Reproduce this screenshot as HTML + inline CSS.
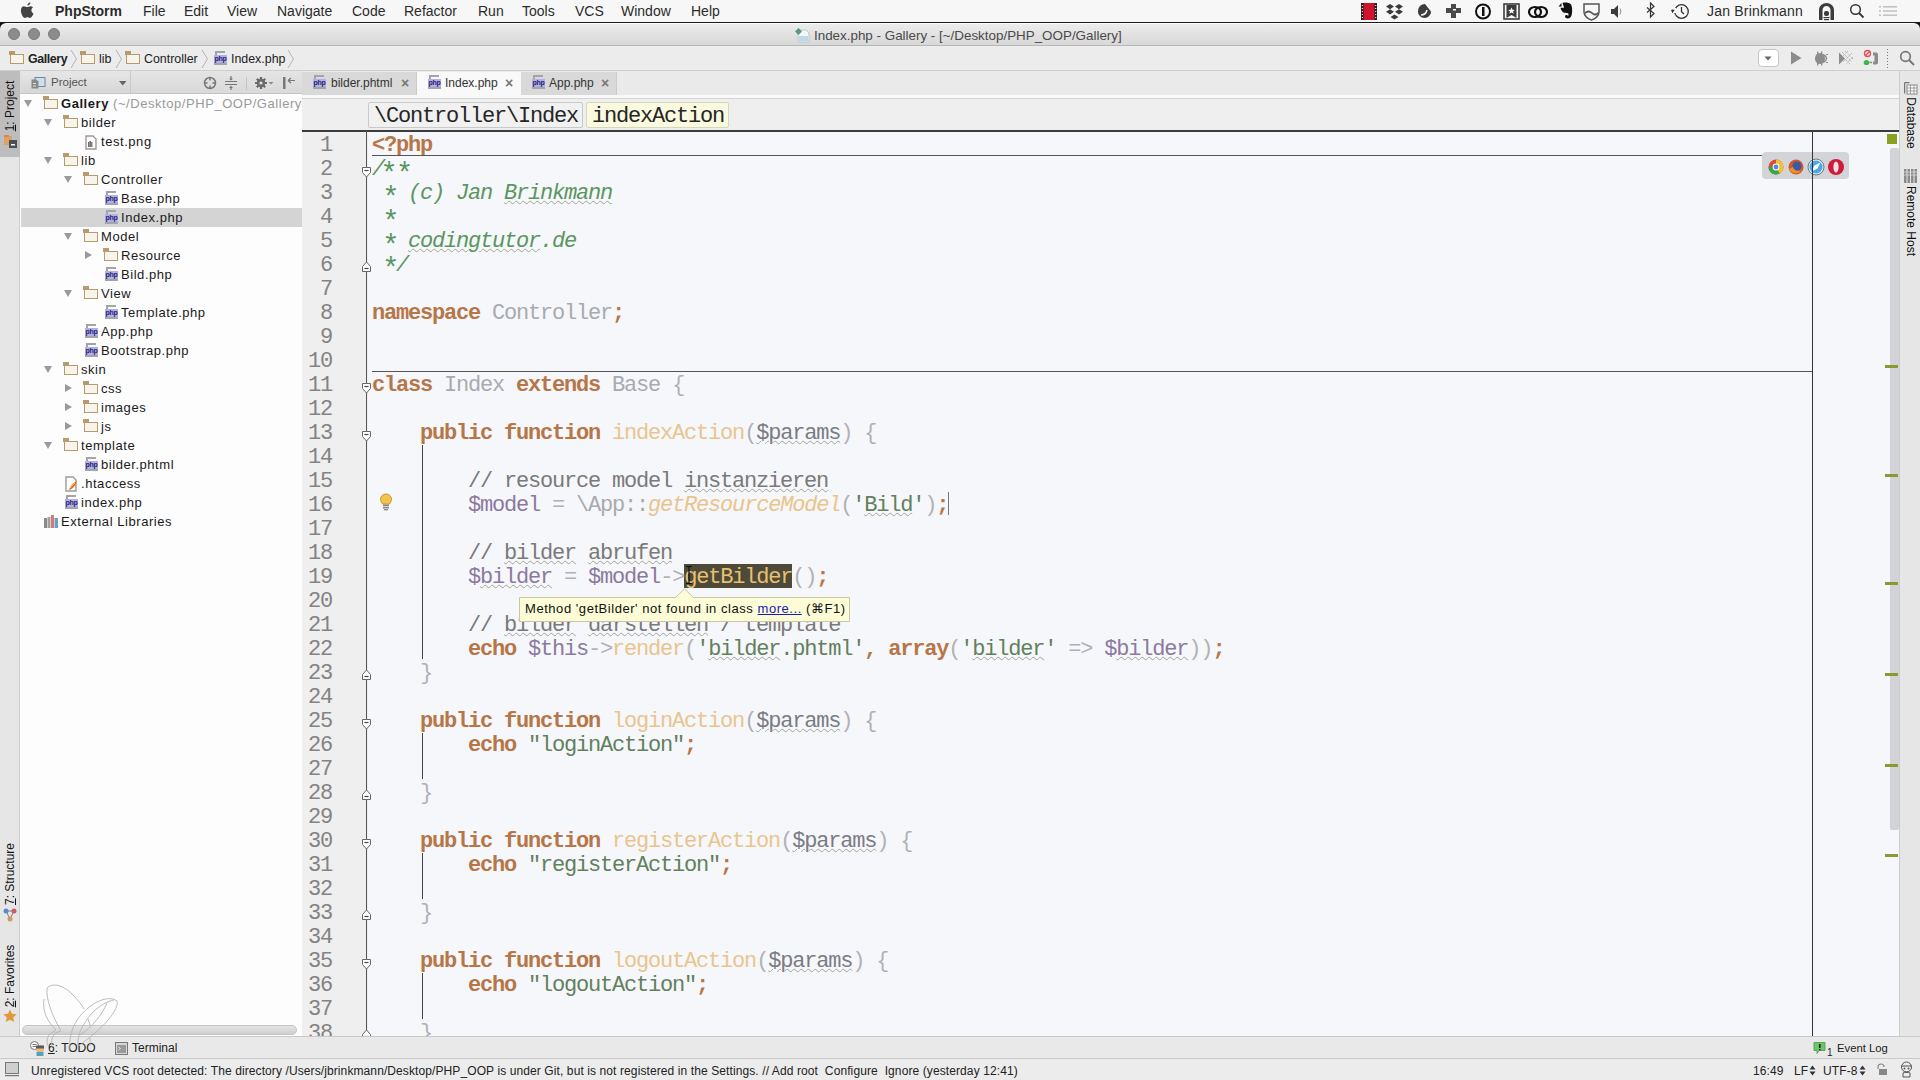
<!DOCTYPE html>
<html><head><meta charset="utf-8">
<style>
*{margin:0;padding:0;box-sizing:border-box}
html,body{width:1920px;height:1080px;overflow:hidden;background:#e8e8e8;font-family:"Liberation Sans",sans-serif;color:#222}
.a{position:absolute}
#menubar{left:0;top:0;width:1920px;height:23px;background:#f7f7f7;border-bottom:1px solid #1a1a1a}
#titlebar{left:0;top:23px;width:1920px;height:23px;background:linear-gradient(#ececec,#d8d8d8);border-top:1px solid #fdfdfd;border-bottom:1px solid #b8b8b8}
#navbar{left:0;top:46px;width:1920px;height:25px;background:#ececec;border-bottom:1px solid #cfcfcf}
#lstrip{left:0;top:71px;width:20px;height:965px;background:#e6e6e6;border-right:1px solid #cdcdcd}
#proj{left:20px;top:71px;width:283px;height:965px;background:#fdfdfd;border-right:1px solid #c5c5c5}
#projhdr{left:0;top:0;width:282px;height:23px;background:linear-gradient(#e4e4e4,#d9d9d9);border-bottom:1px solid #c4c4c4}
#tabs{left:302px;top:71px;width:1597px;height:24px;background:#eaeaea}
#crumb{left:302px;top:95px;width:1597px;height:37px;background:#efefef;border-top:3px solid #f9f9f9;border-bottom:2px solid #3c3c3c;box-shadow:inset 0 1px 0 #d4d4d4}
#gutter{left:302px;top:132px;width:66px;height:905px;background:#efefef}
#editor{left:368px;top:132px;width:1531px;height:904px;background:#f6f7fb}
#rstrip{left:1899px;top:71px;width:21px;height:965px;background:#e6e6e6;border-left:1px solid #cdcdcd}
#bottombar{left:0;top:1036px;width:1920px;height:23px;background:#e9e9e9;border-top:1px solid #c9c9c9;border-bottom:1px solid #c9c9c9}
#status{left:0;top:1059px;width:1920px;height:21px;background:#ececec}
.mono{font-family:"Liberation Mono",monospace;font-size:22px;letter-spacing:-1.2px;white-space:pre}
.ln{position:absolute;left:302px;width:30px;text-align:right;color:#838383;height:24px;line-height:24px}
.cl{position:absolute;left:372px;height:24px;line-height:24px}
.kw{color:#b77648;font-weight:bold}
.dc{color:#5a9660;font-style:italic}
.cm{color:#7a7a7a}
.cn{color:#a8aab0}
.fn{color:#e9c58e}
.fi{color:#e9c58e;font-style:italic}
.vr{color:#8c7a9e}
.pv{color:#7a7c84}
.st{color:#62805c}
.op{color:#b0b1b6}
.sc{color:#b77648;font-weight:bold}
.dcu{color:#5a9660;font-style:italic;text-decoration:underline wavy #a4a494 1px;text-underline-offset:1px}
.cmu{color:#7a7a7a;text-decoration:underline wavy #a4a494 1px;text-underline-offset:1px}
.pvu{color:#7a7c84;text-decoration:underline wavy #a4a494 1px;text-underline-offset:1px}
.stu{color:#62805c;text-decoration:underline wavy #a4a494 1px;text-underline-offset:1px}
.vru{color:#8c7a9e;text-decoration:underline wavy #a4a494 1px;text-underline-offset:1px}
.ast{font-style:normal;display:inline-block;transform:translateY(6px) scale(1.3)}
.hl{color:#e8c070}
.mt{top:0;height:22px;line-height:22px;font-size:14px;color:#2b2b2b;white-space:nowrap}
.tl{top:4px;width:12px;height:12px;border-radius:50%;background:#8c8c8c;border:1px solid #7a7a7a}
.nb{top:1px;height:25px;line-height:25px;font-size:12.4px;color:#222;white-space:nowrap}
.fold{width:14px;height:10px;border:1.7px solid #b59b6e;background:#f7f4ec}
.fold:before{content:"";position:absolute;left:-1.7px;top:-3.700px;width:6px;height:3.400px;background:#b59b6e}
.phpi{width:13px;height:15px}
.phpi:before{content:"";position:absolute;left:1px;top:0;width:10px;height:5px;border-top:2px solid #a4a4a4;border-left:2px solid #a4a4a4;box-sizing:border-box}
.phpi i{position:absolute;left:10px;top:0;width:2px;height:3px;background:#a4a4a4}
.phpi:after{content:"php";position:absolute;left:0;top:4px;width:13px;height:8px;background:#b3b0e8;color:#27246e;font:bold 7px/8px "Liberation Sans",sans-serif;text-align:center;letter-spacing:-0.3px;border-bottom:2px solid #a4a4ac;box-sizing:content-box}
.arr-o{width:0;height:0;border-left:4.500px solid transparent;border-right:4.500px solid transparent;border-top:7px solid #9a9a9a}
.arr-c{width:0;height:0;border-top:4.500px solid transparent;border-bottom:4.500px solid transparent;border-left:7px solid #9a9a9a}
.tb{top:0;height:24px;line-height:24px;font-size:12px;color:#333;white-space:nowrap}
.tx{top:0;height:24px;line-height:24px;font-size:14px;color:#777;font-weight:bold}
.vt{font-size:12px;color:#111;white-space:nowrap;line-height:14px}
.bt{top:1px;height:21px;line-height:21px;font-size:12px;color:#222;white-space:nowrap}
.st2{top:1.5px;height:21px;line-height:21px;font-size:12px;letter-spacing:0.1px;color:#222;white-space:nowrap}
.ui{font-size:13px;white-space:nowrap}
.tree{position:absolute;height:19px;line-height:19px;font-size:13px;letter-spacing:0.55px;white-space:nowrap;color:#1a1a1a}
</style></head><body>
<div id="menubar" class="a">
<svg class="a" style="left:20px;top:2px" width="15" height="17" viewBox="0 0 15 17"><path fill="#444" d="M7.200 5.000C6.300 5.000 5.200 4.200 3.900 4.200C2.100 4.200 0.900 5.900 0.900 8.500C0.900 11.800 3.000 16.000 4.900 16.000C5.900 16.000 6.300 15.300 7.400 15.300C8.500 15.300 8.900 16.000 9.900 16.000C11.400 16.000 12.700 13.700 13.600 11.600C12.200 10.900 11.400 9.800 11.400 8.300C11.400 7.000 12.100 5.900 13.100 5.200C12.300 4.500 11.300 4.200 10.500 4.200C9.100 4.200 8.100 5.000 7.200 5.000Z"/><path fill="#444" d="M7.400 3.600C7.300 2.100 8.600 0.500 10.400 0.200C10.500 1.900 9.200 3.500 7.400 3.600Z"/></svg>
<div class="a mt" style="left:55px;font-weight:bold">PhpStorm</div>
<div class="a mt" style="left:143px">File</div>
<div class="a mt" style="left:184px">Edit</div>
<div class="a mt" style="left:227px">View</div>
<div class="a mt" style="left:277px">Navigate</div>
<div class="a mt" style="left:352px">Code</div>
<div class="a mt" style="left:404px">Refactor</div>
<div class="a mt" style="left:478px">Run</div>
<div class="a mt" style="left:522px">Tools</div>
<div class="a mt" style="left:575px">VCS</div>
<div class="a mt" style="left:621px">Window</div>
<div class="a mt" style="left:691px">Help</div>
<div class="a mt" style="left:1707px;letter-spacing:0.2px">Jan Brinkmann</div>
<svg class="a" style="left:1350px;top:0" width="570" height="22" viewBox="1350 0 570 22">
<rect x="1361" y="3" width="16" height="17" fill="#d0142c"/><rect x="1361" y="3" width="2.5" height="17" fill="#222"/><rect x="1374.5" y="3" width="2.5" height="17" fill="#222"/>
<g fill="#fff"><rect x="1361.8" y="5" width="1" height="1"/><rect x="1361.8" y="8" width="1" height="1"/><rect x="1361.8" y="11" width="1" height="1"/><rect x="1361.8" y="14" width="1" height="1"/><rect x="1361.8" y="17" width="1" height="1"/><rect x="1375.2" y="5" width="1" height="1"/><rect x="1375.2" y="8" width="1" height="1"/><rect x="1375.2" y="11" width="1" height="1"/><rect x="1375.2" y="14" width="1" height="1"/><rect x="1375.2" y="17" width="1" height="1"/></g>
<g fill="#3c3c3c"><path d="M1390 4l-4 2.6 4 2.6 4-2.6zM1399 4l-4 2.6 4 2.6 4-2.6zM1390 9.2l-4 2.6 4 2.6 4-2.6zM1399 9.2l-4 2.6 4 2.6 4-2.6zM1394.5 14.5l-4 2.5 4 2.5 4-2.5z"/></g>
<path d="M1431 4c-4 0-7 3-7 7.500 0 3.500 2.800 6.500 6.500 6.500 3.500 0 6.500-3 6.500-6.500z" transform="translate(-6 0)" fill="#3c3c3c"/><path d="M1421 15c2 0 5-1 6-5" stroke="#f7f7f7" stroke-width="1.6" fill="none"/>
<path d="M1451 4h5v4h5v5h-5v5h-5v-5h-5v-5h5z" fill="#4a4a4a"/><rect x="1453" y="9" width="3" height="1.5" fill="#f7f7f7"/>
<circle cx="1483" cy="11.5" r="7" fill="none" stroke="#111" stroke-width="2"/><rect x="1482" y="7" width="2.5" height="9" fill="#111"/>
<rect x="1504" y="4" width="15" height="15" fill="none" stroke="#3c3c3c" stroke-width="1.6"/><path d="M1506.5 5v13l5-3 5 3v-13z" fill="#3c3c3c"/><path d="M1511.5 7.5l1 2.200 2.300 0.200-1.800 1.500 0.600 2.300-2.100-1.300-2.100 1.300 0.600-2.300-1.800-1.500 2.300-0.200z" fill="#f7f7f7"/>
<ellipse cx="1535" cy="12" rx="6" ry="5" fill="none" stroke="#111" stroke-width="2.2"/><ellipse cx="1541" cy="12" rx="6" ry="5" fill="none" stroke="#111" stroke-width="2.2"/>
<path d="M1558.500 6.500l3-3.500v3.500z" fill="#111"/><path d="M1562.500 3c2-1 7-0.500 8.500 1.500 1.500 2.500 1.500 8 0.500 11-0.800 2.500-3.500 3.500-5.500 2.500-1.500-0.800-1.200-3 0.500-3 1 0 1.300 0.600 1.300 1.200 0.800-0.500 1-2 0.300-3-1.500-0.500-3.500 0-5-1-1.500-1.200-2.500-3-2.500-4.500l0 0h3.500z" fill="#111"/>
<path d="M1584 4h15v8c0 4-4 7-7.500 8-3.500-1-7.500-4-7.500-8z" fill="none" stroke="#555" stroke-width="1.5"/><path d="M1585 12c3-2 5-2 7 0s4 2 6 0v2c-2 2-4 2-6 0s-4-2-7 0z" fill="#555"/>
<path d="M1611 9h3l4-4v13l-4-4h-3z" fill="#3c3c3c"/><path d="M1620 8.500c1 1.500 1 4.500 0 6" stroke="#888" stroke-width="1" fill="none"/>
<path d="M1647 7.500l7 6-3.500 3.500v-14l3.500 3.500-7 6" stroke="#333" stroke-width="1.2" fill="none"/>
<circle cx="1681.500" cy="11.500" r="6.800" fill="none" stroke="#333" stroke-width="1.3"/><path d="M1681.500 7v4.800l2.500 2.200" stroke="#333" stroke-width="1.3" fill="none"/><path d="M1671 10l3 0.500-1.600 2.800z" fill="#333"/><rect x="1673" y="8" width="3" height="5" fill="#f7f7f7"/><path d="M1671.500 9.500l3.200 0.300-1.800 2.600z" fill="#333"/>
<path d="M1819 20v-10c0-4 3.500-7 7.500-7s7.500 3 7.500 7v10h-3.500v-10c0-2.200-1.800-4-4-4s-4 1.800-4 4v10z" fill="#3c3c3c"/><rect x="1824" y="11" width="5" height="5" rx="2" fill="#3c3c3c"/><rect x="1823.500" y="17" width="6" height="1.200" fill="#3c3c3c"/><rect x="1824" y="19" width="5" height="1.200" fill="#3c3c3c"/>
<circle cx="1855.500" cy="9.500" r="4.800" fill="none" stroke="#333" stroke-width="1.500"/><path d="M1859 13l4.500 4.500" stroke="#333" stroke-width="1.800"/>
<g fill="#c4c4c4"><rect x="1879" y="6" width="2" height="1.600"/><rect x="1883" y="6" width="14" height="1.600"/><rect x="1879" y="10.200" width="2" height="1.600"/><rect x="1883" y="10.200" width="14" height="1.600"/><rect x="1879" y="14.400" width="2" height="1.600"/><rect x="1883" y="14.400" width="14" height="1.600"/></g>
</svg>
</div>
<div id="titlebar" class="a">
<div class="a" style="left:0;top:-1px;width:6px;height:6px;background:#111"><div style="width:6px;height:6px;border-top-left-radius:6px;background:#ececec"></div></div><div class="a" style="left:1914px;top:-1px;width:6px;height:6px;background:#111"><div style="width:6px;height:6px;border-top-right-radius:6px;background:#ececec"></div></div>
<div class="a tl" style="left:8px"></div><div class="a tl" style="left:28px"></div><div class="a tl" style="left:48px"></div>
<svg class="a" style="left:794px;top:3px" width="17" height="16" viewBox="0 0 17 16"><path d="M4 3h8l3 3v9h-11z" fill="#f4f6f8" stroke="#b8c4cc" stroke-width="1"/><rect x="5" y="9" width="9" height="5" fill="#bcd8ea"/><path d="M4.500 1l3.500 3.500-3.500 3.500-3.500-3.500z" fill="#5a9a7a"/></svg>
<div class="a" style="left:814px;top:1px;height:22px;line-height:22px;font-size:13.4px;color:#4a4a4a;white-space:nowrap">Index.php - Gallery - [~/Desktop/PHP_OOP/Gallery]</div>
</div>
<div id="navbar" class="a">
<div class="a fold" style="left:10px;top:8px"></div>
<div class="a nb" style="left:28px;font-weight:bold;letter-spacing:-0.4px">Gallery</div>
<svg class="a" style="left:70px;top:3px" width="8" height="20"><path d="M1 1l5.500 9-5.500 9" stroke="#b4b4b4" fill="none"/></svg>
<div class="a fold" style="left:81px;top:8px"></div>
<div class="a nb" style="left:99px">lib</div>
<svg class="a" style="left:115px;top:3px" width="8" height="20"><path d="M1 1l5.500 9-5.500 9" stroke="#b4b4b4" fill="none"/></svg>
<div class="a fold" style="left:126px;top:8px"></div>
<div class="a nb" style="left:144px">Controller</div>
<svg class="a" style="left:201px;top:3px" width="8" height="20"><path d="M1 1l5.500 9-5.500 9" stroke="#b4b4b4" fill="none"/></svg>
<div class="a phpi" style="left:214px;top:5px"></div>
<div class="a nb" style="left:231px">Index.php</div>
<svg class="a" style="left:287px;top:3px" width="8" height="20"><path d="M1 1l5.500 9-5.500 9" stroke="#b4b4b4" fill="none"/></svg>
<div class="a" style="left:1758px;top:3px;width:21px;height:18px;background:#fff;border:1px solid #c6c6c6;border-radius:4px"></div>
<svg class="a" style="left:1740px;top:0" width="180" height="25" viewBox="1740 46 180 25">
<path d="M1764.500 56.500h7l-3.500 4z" fill="#666"/>
<path d="M1791 51.500v13l10.500-6.500z" fill="#8c8c8c"/>
<g fill="#8c8c8c"><ellipse cx="1820" cy="58.500" rx="5" ry="5.500"/><path d="M1823 55c1.500 0 3.500 1.500 3.500 3.500s-2 3.500-3.500 3.500" stroke="#8c8c8c" stroke-width="1.400" fill="none"/><rect x="1817" y="51.500" width="1.300" height="2.500"/><rect x="1821" y="51.500" width="1.300" height="2.500"/><rect x="1817" y="63" width="1.300" height="2.500"/><rect x="1821" y="63" width="1.300" height="2.500"/><rect x="1826" y="54" width="2" height="1"/><rect x="1826" y="62" width="2" height="1"/></g>
<path d="M1839 52.500v12l6-6z" fill="#8c8c8c"/><path d="M1842 52l10 10M1845 51l8 8M1842 56l8 8M1848 51l-7 7M1852 53l-9 9M1853 57l-7 7" stroke="#a6a6a6" stroke-width="1" stroke-dasharray="1 1"/>
<circle cx="1867.500" cy="53.500" r="3" fill="none" stroke="#e2505a" stroke-width="1.400"/><path d="M1865.500 55.500l4-4" stroke="#e2505a" stroke-width="1.200"/>
<ellipse cx="1866.500" cy="62.500" rx="2.800" ry="2.600" fill="#3cb84a"/><path d="M1873 52.500h3c1.500 0 2 1 2 2v8c0 1-0.500 2-2 2h-3v-3h1.500v-6h-1.500z" fill="#8c8c8c"/><rect x="1869.500" y="61.700" width="2.500" height="1.500" fill="#8c8c8c"/>
<g fill="#7a7a7a"><rect x="1887" y="49" width="1" height="1"/><rect x="1887" y="52" width="1" height="1"/><rect x="1887" y="55" width="1" height="1"/><rect x="1887" y="58" width="1" height="1"/><rect x="1887" y="61" width="1" height="1"/><rect x="1887" y="64" width="1" height="1"/><rect x="1887" y="67" width="1" height="1"/></g>
<circle cx="1905.500" cy="56.500" r="4.800" fill="none" stroke="#777" stroke-width="1.700"/><path d="M1909 60l5 5" stroke="#777" stroke-width="2"/>
</svg>
</div>
<div id="lstrip" class="a">
<div class="a" style="left:0;top:0;width:20px;height:86px;background:#bdbdbd"></div>
<div class="a vt" style="left:10px;top:35px;transform:translate(-50%,-50%) rotate(-90deg)"><u>1</u>: Project</div>
<svg class="a" style="left:4px;top:64px" width="13" height="13"><rect x="0" y="1" width="8" height="9" fill="#e0a060"/><rect x="0" y="0" width="5" height="2" fill="#c89050"/><rect x="5" y="5" width="8" height="8" fill="#4a5058"/><rect x="7" y="9" width="4" height="1.500" fill="#fff"/></svg>
<div class="a vt" style="left:10px;top:803px;transform:translate(-50%,-50%) rotate(-90deg)"><u>7</u>: Structure</div>
<svg class="a" style="left:3px;top:837px" width="14" height="14"><path d="M3 3L7 11L11 3z" fill="none" stroke="#7a7a7a" stroke-width="1"/><circle cx="3" cy="3" r="2.500" fill="#5a8ad0"/><circle cx="11" cy="3" r="2.500" fill="#d05a6a"/><circle cx="7" cy="11" r="2.500" fill="#d09a5a"/></svg>
<div class="a vt" style="left:10px;top:905px;transform:translate(-50%,-50%) rotate(-90deg)"><u>2</u>: Favorites</div>
<svg class="a" style="left:3px;top:938px" width="14" height="14"><path d="M7 0.500l2 4.300 4.700 0.500-3.500 3.200 1 4.600-4.200-2.400-4.200 2.400 1-4.600-3.500-3.200 4.700-0.500z" fill="#e09a3a"/></svg>
</div>
<div id="proj" class="a">
<div id="projhdr" class="a">
<div class="a" style="left:2px;top:2px;width:108px;height:19px;background:linear-gradient(#e6e6e6,#d6d6d6);border-radius:3px"></div>
<div class="a" style="left:110px;top:0;width:1px;height:23px;background:#c8c8c8"></div>
<svg class="a" style="left:11px;top:6px" width="15" height="12"><rect x="4" y="0.500" width="10" height="9" fill="#cfe0ea" stroke="#6a8aa0" stroke-width="1"/><path d="M0.500 2.500h5l2 2v7h-7z" fill="#8a8a8a"/><rect x="2" y="6" width="3" height="1" fill="#ddd"/><rect x="2" y="8.500" width="3" height="1" fill="#ddd"/></svg>
<div class="a" style="left:31px;top:0;height:23px;line-height:23px;font-size:11.5px;color:#555">Project</div>
<svg class="a" style="left:99px;top:10px" width="8" height="5"><path d="M0 0h7.500l-3.750 4.500z" fill="#666"/></svg>
<svg class="a" style="left:182px;top:4px" width="100" height="16" viewBox="202 75 100 16">
<circle cx="210" cy="83" r="5.500" fill="none" stroke="#777" stroke-width="1.500"/><path d="M210 77.500v3M210 85.500v3M204.500 83h3M212.500 83h3" stroke="#777" stroke-width="1.500"/>
<path d="M225 81.500h12M225 84.500h12" stroke="#777" stroke-width="1.200"/><path d="M231 76v3.500M231 86.500v3.500" stroke="#777" stroke-width="1.200"/><path d="M229 78.500l2 2 2-2zM229 88l2-2 2 2z" fill="#777"/>
<rect x="246" y="77" width="1" height="13" fill="#c4c4c4"/>
<circle cx="261" cy="83" r="4.200" fill="#6a6a6a"/><g stroke="#6a6a6a" stroke-width="2.200"><path d="M261 77v12M255 83h12M256.800 78.800l8.400 8.400M265.200 78.800l-8.400 8.400"/></g><circle cx="261" cy="83" r="1.600" fill="#e0e0e0"/><path d="M268.500 82h5l-2.500 2.500z" fill="#888"/>
<rect x="283" y="77" width="2.500" height="12" fill="#777"/><path d="M288 80.500h7M288 80.500l3-2.500M288 80.500l3 2.500" stroke="#777" stroke-width="1.200" fill="none"/>
</svg>
</div>
<div class="a arr-o" style="left:4px;top:29px"></div>
<div class="a fold" style="left:24px;top:28px"></div>
<div class="tree" style="left:41px;top:23px"><span style="font-weight:bold">Gallery</span><span style="color:#9a9a9a"> (~/Desktop/PHP_OOP/Gallery)</span></div>
<div class="a arr-o" style="left:24px;top:48px"></div>
<div class="a fold" style="left:44px;top:47px"></div>
<div class="tree" style="left:61px;top:42px"><span>bilder</span></div>
<svg class="a" style="left:65px;top:64px" width="12" height="15"><path d="M1 1h7l3 3v10h-10z" fill="#fff" stroke="#9a9a9a" stroke-width="1.400"/><rect x="3" y="7" width="1.500" height="5" fill="#4a78b8"/><rect x="4.500" y="6" width="1.500" height="6" fill="#c84848"/><rect x="6" y="7" width="1.500" height="5" fill="#6a9a58"/></svg>
<div class="tree" style="left:81px;top:61px"><span>test.png</span></div>
<div class="a arr-o" style="left:24px;top:86px"></div>
<div class="a fold" style="left:44px;top:85px"></div>
<div class="tree" style="left:61px;top:80px"><span>lib</span></div>
<div class="a arr-o" style="left:44px;top:105px"></div>
<div class="a fold" style="left:64px;top:104px"></div>
<div class="tree" style="left:81px;top:99px"><span>Controller</span></div>
<div class="a phpi" style="left:85px;top:120px"></div>
<div class="tree" style="left:101px;top:118px"><span>Base.php</span></div>
<div class="a" style="left:1px;top:137px;width:281px;height:19px;background:#d4d4d4"></div>
<div class="a phpi" style="left:85px;top:139px"></div>
<div class="tree" style="left:101px;top:137px"><span>Index.php</span></div>
<div class="a arr-o" style="left:44px;top:162px"></div>
<div class="a fold" style="left:64px;top:161px"></div>
<div class="tree" style="left:81px;top:156px"><span>Model</span></div>
<div class="a arr-c" style="left:65px;top:180px"></div>
<div class="a fold" style="left:84px;top:180px"></div>
<div class="tree" style="left:101px;top:175px"><span>Resource</span></div>
<div class="a phpi" style="left:85px;top:196px"></div>
<div class="tree" style="left:101px;top:194px"><span>Bild.php</span></div>
<div class="a arr-o" style="left:44px;top:219px"></div>
<div class="a fold" style="left:64px;top:218px"></div>
<div class="tree" style="left:81px;top:213px"><span>View</span></div>
<div class="a phpi" style="left:85px;top:234px"></div>
<div class="tree" style="left:101px;top:232px"><span>Template.php</span></div>
<div class="a phpi" style="left:65px;top:253px"></div>
<div class="tree" style="left:81px;top:251px"><span>App.php</span></div>
<div class="a phpi" style="left:65px;top:272px"></div>
<div class="tree" style="left:81px;top:270px"><span>Bootstrap.php</span></div>
<div class="a arr-o" style="left:24px;top:295px"></div>
<div class="a fold" style="left:44px;top:294px"></div>
<div class="tree" style="left:61px;top:289px"><span>skin</span></div>
<div class="a arr-c" style="left:45px;top:313px"></div>
<div class="a fold" style="left:64px;top:313px"></div>
<div class="tree" style="left:81px;top:308px"><span>css</span></div>
<div class="a arr-c" style="left:45px;top:332px"></div>
<div class="a fold" style="left:64px;top:332px"></div>
<div class="tree" style="left:81px;top:327px"><span>images</span></div>
<div class="a arr-c" style="left:45px;top:351px"></div>
<div class="a fold" style="left:64px;top:351px"></div>
<div class="tree" style="left:81px;top:346px"><span>js</span></div>
<div class="a arr-o" style="left:24px;top:371px"></div>
<div class="a fold" style="left:44px;top:370px"></div>
<div class="tree" style="left:61px;top:365px"><span>template</span></div>
<div class="a phpi" style="left:65px;top:386px"></div>
<div class="tree" style="left:81px;top:384px"><span>bilder.phtml</span></div>
<svg class="a" style="left:45px;top:405px" width="14" height="16"><path d="M1 1h7l3 3v11h-10z" fill="#fff" stroke="#9a9a9a" stroke-width="1.400"/><path d="M4 14c1-4 4-7 8-9-1 4-4 8-8 9z" fill="#e06a2a"/><path d="M5 12l5-5" stroke="#f0c040" stroke-width="1"/></svg>
<div class="tree" style="left:61px;top:403px"><span>.htaccess</span></div>
<div class="a phpi" style="left:45px;top:424px"></div>
<div class="tree" style="left:61px;top:422px"><span>index.php</span></div>
<svg class="a" style="left:24px;top:444px" width="15" height="13"><rect x="0" y="3" width="3" height="10" fill="#8a8a8a"/><rect x="3.500" y="2" width="3" height="11" fill="#a0a0a0"/><rect x="7" y="0" width="3" height="13" fill="#d07a7a"/><rect x="10.500" y="3" width="3.500" height="10" fill="#6aa0c8"/></svg>
<div class="tree" style="left:41px;top:441px"><span>External Libraries</span></div>
</div>
<div class="a" style="left:22px;top:1025px;width:275px;height:10px;background:linear-gradient(#e4e4e4,#cfcfcf);border:1px solid #c4c4c4;border-radius:5px"></div>
<div id="tabs" class="a">
<div class="a" style="left:0;top:1px;width:115px;height:23px;background:#d9d9d9;border-right:1px solid #cacaca"></div>
<div class="a" style="left:115px;top:1px;width:104px;height:27px;background:#f9f9f9"></div>
<div class="a" style="left:219px;top:1px;width:96px;height:23px;background:#d9d9d9;border-right:1px solid #cacaca"></div>
<div class="a phpi" style="left:11px;top:4px"></div>
<div class="a tb" style="left:29px">bilder.phtml</div>
<div class="a tx" style="left:99px">&#215;</div>
<div class="a phpi" style="left:126px;top:4px"></div>
<div class="a tb" style="left:143px">Index.php</div>
<div class="a tx" style="left:203px">&#215;</div>
<div class="a phpi" style="left:230px;top:4px"></div>
<div class="a tb" style="left:247px">App.php</div>
<div class="a tx" style="left:299px">&#215;</div>
</div>
<div id="crumb" class="a">
<div class="a" style="left:66px;top:4px;width:215px;height:26px;background:#f1f1f1;border:1px solid #c9c9c9;border-radius:2px"></div>
<div class="a" style="left:284px;top:4px;width:143px;height:26px;background:#fafae0;border:1px solid #d6d6b8;border-radius:2px"></div>
<div class="a mono" style="left:72px;top:6px;height:26px;line-height:26px;color:#262626">\Controller\Index</div>
<div class="a mono" style="left:290px;top:6px;height:26px;line-height:26px;color:#262626">indexAction</div>
</div>
<div id="gutter" class="a"></div>
<div id="editor" class="a"></div>
<div id="rstrip" class="a">
<svg class="a" style="left:4px;top:11px" width="14" height="13"><path d="M0.500 0.500h5M0.500 0.500v11" stroke="#777" stroke-width="1.500"/><rect x="3" y="3" width="10" height="9" fill="#fff" stroke="#888" stroke-width="1"/><path d="M3 6h10M3 9h10M6.500 3v9M10 3v9" stroke="#888" stroke-width="0.800"/></svg>
<div class="a vt" style="left:11px;top:52px;transform:translate(-50%,-50%) rotate(90deg)">Database</div>
<svg class="a" style="left:4px;top:98px" width="13" height="15"><g fill="#8a8a8a"><rect x="0" y="0" width="2.500" height="14"/><rect x="3.500" y="0" width="2.500" height="14"/><rect x="7" y="0" width="2.500" height="14"/><rect x="10.500" y="0" width="2.500" height="14"/></g><path d="M0 3h13M0 6h13" stroke="#ddd" stroke-width="0.800"/></svg>
<div class="a vt" style="left:11px;top:150px;transform:translate(-50%,-50%) rotate(90deg)">Remote Host</div>
</div>
<div id="bottombar" class="a">
<svg class="a" style="left:30px;top:4px" width="16" height="15"><circle cx="4.500" cy="4.500" r="4" fill="#fff" stroke="#777" stroke-width="1"/><path d="M2.500 3.500h4M2.500 5.500h4" stroke="#555" stroke-width="0.800"/><circle cx="10" cy="8" r="4" fill="#e8b888"/><rect x="6" y="4.500" width="8" height="3" fill="#5a5a5a"/><rect x="6.500" y="11" width="7" height="4" fill="#5aa0b8"/></svg>
<div class="a bt" style="left:48px"><u>6</u>: TODO</div>
<svg class="a" style="left:115px;top:5px" width="13" height="13"><rect x="0.500" y="0.500" width="12" height="12" fill="#d8d8d8" stroke="#777" stroke-width="1"/><rect x="2" y="3" width="9" height="8" fill="#9a9a9a"/><path d="M3.500 5l2 1.500-2 1.500" stroke="#eee" stroke-width="0.900" fill="none"/></svg>
<div class="a bt" style="left:132px">Terminal</div>
<svg class="a" style="left:1813px;top:4px" width="20" height="16"><path d="M1 1.500h11v8h-6l-2 3v-3h-3z" fill="#6cc46c" stroke="#58a858" stroke-width="1"/><rect x="6" y="3" width="1.600" height="4" fill="#222"/><rect x="6" y="8" width="1.600" height="1.200" fill="#222"/><text x="14" y="15" font-size="10" font-family="Liberation Sans" fill="#222">1</text></svg>
<div class="a bt" style="left:1837px;font-size:11.3px">Event Log</div>
</div>
<div id="status" class="a">
<svg class="a" style="left:5px;top:3px" width="15" height="15"><rect x="0.500" y="0.500" width="13" height="11" fill="#cfcfcf" stroke="#777" stroke-width="1"/><rect x="0" y="13" width="14" height="1.200" fill="#777"/></svg>
<div class="a st2" style="left:31px">Unregistered VCS root detected: The directory /Users/jbrinkmann/Desktop/PHP_OOP is under Git, but is not registered in the Settings. // Add root&nbsp; Configure&nbsp; Ignore (yesterday 12:41)</div>
<div class="a st2" style="left:1753px">16:49</div>
<div class="a st2" style="left:1794px">LF<svg width="7" height="11" style="vertical-align:-1px;margin-left:1px"><path d="M0.500 4.500l3-4 3 4zM0.500 6.500l3 4 3-4z" fill="#333"/></svg></div>
<div class="a st2" style="left:1823px">UTF-8<svg width="7" height="11" style="vertical-align:-1px;margin-left:1px"><path d="M0.500 4.500l3-4 3 4zM0.500 6.500l3 4 3-4z" fill="#333"/></svg></div>
<svg class="a" style="left:1876px;top:4px" width="12" height="13"><path d="M2 6v-2c0-2 1.500-3 3-3s3 1 3 3" stroke="#888" stroke-width="1.200" fill="none"/><rect x="3" y="6" width="8" height="6" fill="#888"/></svg>
<svg class="a" style="left:1899px;top:2px" width="15" height="17"><circle cx="7.500" cy="6" r="5" fill="none" stroke="#555" stroke-width="1"/><path d="M2.500 5h10" stroke="#555"/><circle cx="5.500" cy="7.500" r="1" fill="#555"/><circle cx="9.500" cy="7.500" r="1" fill="#555"/><path d="M4 12c1-1 6-1 7 0v4h-7z" fill="none" stroke="#555" stroke-width="1"/><path d="M5.500 10.500c1 1 3 1 4 0" stroke="#555" fill="none"/></svg>
</div>
<div id="code" class="a mono" style="left:0;top:0;width:1920px;height:1036px;overflow:hidden">
<div class="a" style="left:684px;top:564px;width:108px;height:24px;background:#4d4a3a"></div>
<div class="ln" style="top:134px">1</div>
<div class="cl" style="top:134px"><span class="kw">&lt;?php</span></div>
<div class="ln" style="top:158px">2</div>
<div class="cl" style="top:158px"><span class="dc">/</span><span class="dc ast">**</span></div>
<div class="ln" style="top:182px">3</div>
<div class="cl" style="top:182px"><span class="dc"> </span><span class="dc ast">*</span><span class="dc"> (c) Jan </span><span class="dcu">Brinkmann</span></div>
<div class="ln" style="top:206px">4</div>
<div class="cl" style="top:206px"><span class="dc"> </span><span class="dc ast">*</span></div>
<div class="ln" style="top:230px">5</div>
<div class="cl" style="top:230px"><span class="dc"> </span><span class="dc ast">*</span><span class="dc"> </span><span class="dcu">codingtutor</span><span class="dc">.de</span></div>
<div class="ln" style="top:254px">6</div>
<div class="cl" style="top:254px"><span class="dc"> </span><span class="dc ast">*</span><span class="dc">/</span></div>
<div class="ln" style="top:278px">7</div>
<div class="ln" style="top:302px">8</div>
<div class="cl" style="top:302px"><span class="kw">namespace</span> <span class="cn">Controller</span><span class="sc">;</span></div>
<div class="ln" style="top:326px">9</div>
<div class="ln" style="top:350px">10</div>
<div class="ln" style="top:374px">11</div>
<div class="cl" style="top:374px"><span class="kw">class</span> <span class="cn">Index</span> <span class="kw">extends</span> <span class="cn">Base</span> <span class="op">{</span></div>
<div class="ln" style="top:398px">12</div>
<div class="ln" style="top:422px">13</div>
<div class="cl" style="top:422px">    <span class="kw">public</span> <span class="kw">function</span> <span class="fn">indexAction</span><span class="op">(</span><span class="pvu">$params</span><span class="op">)</span> <span class="op">{</span></div>
<div class="ln" style="top:446px">14</div>
<div class="ln" style="top:470px">15</div>
<div class="cl" style="top:470px">        <span class="cm">// resource model </span><span class="cmu">instanzieren</span></div>
<div class="ln" style="top:494px">16</div>
<div class="cl" style="top:494px">        <span class="vr">$model</span> <span class="op">=</span> <span class="cn">\App::</span><span class="fi">getResourceModel</span><span class="op">(</span><span class="st">'</span><span class="stu">Bild</span><span class="st">'</span><span class="op">)</span><span class="sc">;</span></div>
<div class="ln" style="top:518px">17</div>
<div class="ln" style="top:542px">18</div>
<div class="cl" style="top:542px">        <span class="cm">// </span><span class="cmu">bilder</span><span class="cm"> </span><span class="cmu">abrufen</span></div>
<div class="ln" style="top:566px">19</div>
<div class="cl" style="top:566px">        <span class="vr">$</span><span class="vru">bilder</span> <span class="op">=</span> <span class="vr">$model</span><span class="op">-&gt;</span><span class="hl">getBilder</span><span class="op">()</span><span class="sc">;</span></div>
<div class="ln" style="top:590px">20</div>
<div class="ln" style="top:614px">21</div>
<div class="cl" style="top:614px">        <span class="cm">// </span><span class="cmu">bilder</span><span class="cm"> </span><span class="cmu">darstellen</span><span class="cm"> / template</span></div>
<div class="ln" style="top:638px">22</div>
<div class="cl" style="top:638px">        <span class="kw">echo</span> <span class="vr">$this</span><span class="op">-&gt;</span><span class="fn">render</span><span class="op">(</span><span class="st">'</span><span class="stu">bilder</span><span class="st">.phtml'</span><span class="sc">,</span> <span class="kw">array</span><span class="op">(</span><span class="st">'</span><span class="stu">bilder</span><span class="st">'</span> <span class="op">=&gt;</span> <span class="vr">$</span><span class="vru">bilder</span><span class="op">))</span><span class="sc">;</span></div>
<div class="ln" style="top:662px">23</div>
<div class="cl" style="top:662px">    <span class="op">}</span></div>
<div class="ln" style="top:686px">24</div>
<div class="ln" style="top:710px">25</div>
<div class="cl" style="top:710px">    <span class="kw">public</span> <span class="kw">function</span> <span class="fn">loginAction</span><span class="op">(</span><span class="pvu">$params</span><span class="op">)</span> <span class="op">{</span></div>
<div class="ln" style="top:734px">26</div>
<div class="cl" style="top:734px">        <span class="kw">echo</span> <span class="st">"loginAction"</span><span class="sc">;</span></div>
<div class="ln" style="top:758px">27</div>
<div class="ln" style="top:782px">28</div>
<div class="cl" style="top:782px">    <span class="op">}</span></div>
<div class="ln" style="top:806px">29</div>
<div class="ln" style="top:830px">30</div>
<div class="cl" style="top:830px">    <span class="kw">public</span> <span class="kw">function</span> <span class="fn">registerAction</span><span class="op">(</span><span class="pvu">$params</span><span class="op">)</span> <span class="op">{</span></div>
<div class="ln" style="top:854px">31</div>
<div class="cl" style="top:854px">        <span class="kw">echo</span> <span class="st">"registerAction"</span><span class="sc">;</span></div>
<div class="ln" style="top:878px">32</div>
<div class="ln" style="top:902px">33</div>
<div class="cl" style="top:902px">    <span class="op">}</span></div>
<div class="ln" style="top:926px">34</div>
<div class="ln" style="top:950px">35</div>
<div class="cl" style="top:950px">    <span class="kw">public</span> <span class="kw">function</span> <span class="fn">logoutAction</span><span class="op">(</span><span class="pvu">$params</span><span class="op">)</span> <span class="op">{</span></div>
<div class="ln" style="top:974px">36</div>
<div class="cl" style="top:974px">        <span class="kw">echo</span> <span class="st">"logoutAction"</span><span class="sc">;</span></div>
<div class="ln" style="top:998px">37</div>
<div class="ln" style="top:1022px">38</div>
<div class="cl" style="top:1022px">    <span class="op">}</span></div>
</div>
<div id="deco" class="a" style="left:0;top:0;width:1920px;height:1036px;overflow:hidden">
<div class="a" style="left:366px;top:131px;width:1px;height:905px;background:#555"></div>
<svg class="a" style="left:362px;top:167px" width="10" height="11"><path d="M0.500 0.500h8v5l-4 4.500-4-4.500z" fill="#fff" stroke="#666" stroke-width="1"/><path d="M2.500 3.500h4" stroke="#444" stroke-width="1.200"/></svg>
<svg class="a" style="left:362px;top:383px" width="10" height="11"><path d="M0.500 0.500h8v5l-4 4.500-4-4.500z" fill="#fff" stroke="#666" stroke-width="1"/><path d="M2.500 3.500h4" stroke="#444" stroke-width="1.200"/></svg>
<svg class="a" style="left:362px;top:431px" width="10" height="11"><path d="M0.500 0.500h8v5l-4 4.500-4-4.500z" fill="#fff" stroke="#666" stroke-width="1"/><path d="M2.500 3.500h4" stroke="#444" stroke-width="1.200"/></svg>
<svg class="a" style="left:362px;top:719px" width="10" height="11"><path d="M0.500 0.500h8v5l-4 4.500-4-4.500z" fill="#fff" stroke="#666" stroke-width="1"/><path d="M2.500 3.500h4" stroke="#444" stroke-width="1.200"/></svg>
<svg class="a" style="left:362px;top:839px" width="10" height="11"><path d="M0.500 0.500h8v5l-4 4.500-4-4.500z" fill="#fff" stroke="#666" stroke-width="1"/><path d="M2.500 3.500h4" stroke="#444" stroke-width="1.200"/></svg>
<svg class="a" style="left:362px;top:959px" width="10" height="11"><path d="M0.500 0.500h8v5l-4 4.500-4-4.500z" fill="#fff" stroke="#666" stroke-width="1"/><path d="M2.500 3.500h4" stroke="#444" stroke-width="1.200"/></svg>
<svg class="a" style="left:362px;top:261px" width="10" height="11"><path d="M0.500 10.500h8v-5l-4-4.500-4 4.500z" fill="#fff" stroke="#666" stroke-width="1"/><path d="M2.500 7.500h4" stroke="#444" stroke-width="1.200"/></svg>
<svg class="a" style="left:362px;top:669px" width="10" height="11"><path d="M0.500 10.500h8v-5l-4-4.500-4 4.500z" fill="#fff" stroke="#666" stroke-width="1"/><path d="M2.500 7.500h4" stroke="#444" stroke-width="1.200"/></svg>
<svg class="a" style="left:362px;top:789px" width="10" height="11"><path d="M0.500 10.500h8v-5l-4-4.500-4 4.500z" fill="#fff" stroke="#666" stroke-width="1"/><path d="M2.500 7.500h4" stroke="#444" stroke-width="1.200"/></svg>
<svg class="a" style="left:362px;top:909px" width="10" height="11"><path d="M0.500 10.500h8v-5l-4-4.500-4 4.500z" fill="#fff" stroke="#666" stroke-width="1"/><path d="M2.500 7.500h4" stroke="#444" stroke-width="1.200"/></svg>
<svg class="a" style="left:362px;top:1029px" width="10" height="11"><path d="M0.500 10.500h8v-5l-4-4.500-4 4.500z" fill="#fff" stroke="#666" stroke-width="1"/><path d="M2.500 7.500h4" stroke="#444" stroke-width="1.200"/></svg>
<div class="a" style="left:372px;top:155px;width:1440px;height:1px;background:#555"></div>
<div class="a" style="left:372px;top:371px;width:1440px;height:1px;background:#555"></div>
<div class="a" style="left:422px;top:445px;width:1px;height:214px;background:#444"></div>
<div class="a" style="left:422px;top:733px;width:1px;height:46px;background:#444"></div>
<div class="a" style="left:422px;top:853px;width:1px;height:46px;background:#444"></div>
<div class="a" style="left:422px;top:973px;width:1px;height:46px;background:#444"></div>
<svg class="a" style="left:379px;top:493px" width="14" height="18"><path d="M7 1c3.200 0 5.500 2.300 5.500 5.300 0 2.200-1.500 3.300-2 4.700h-7c-0.500-1.400-2-2.500-2-4.700 0-3 2.300-5.300 5.500-5.300z" fill="#f2c24a" stroke="#c8962a" stroke-width="1"/><rect x="4" y="11.500" width="6" height="1.600" fill="#888"/><rect x="4" y="13.800" width="6" height="1.600" fill="#888"/><rect x="5" y="16" width="4" height="1.300" fill="#888"/></svg>
<div class="a" style="left:948px;top:492px;width:1px;height:23px;background:#777"></div>
<svg class="a" style="left:684px;top:565px" width="10" height="22"><path d="M2 1.500h2.500l0.500 0.500 0.500-0.500h2.500M5 2v16M2 18.500h2.500l0.500-0.500 0.500 0.500h2.500" stroke="#111" stroke-width="1.200" fill="none"/></svg>
<svg class="a" style="left:519px;top:588px" width="331" height="35"><path d="M0.500 9.500h156l9-8.500 9 8.500h156v24h-330z" fill="#fcfcd6" stroke="#c9c6a0" stroke-width="1"/></svg>
<div class="a" style="left:525px;top:598px;height:22px;line-height:22px;font-size:13px;letter-spacing:0.55px;color:#111;white-space:nowrap">Method 'getBilder' not found in class <span style="color:#1a1ab8;text-decoration:underline">more...</span> (&#8984;F1)</div>
<div class="a" style="left:1762px;top:152px;width:87px;height:27px;background:#d3d4d8;border-radius:4px"></div>
<svg class="a" style="left:1766px;top:157px" width="80" height="20">
<circle cx="10" cy="10" r="7.500" fill="#e04a3a"/><path d="M10 10L2.500 10A7.500 7.500 0 0 0 13.750 16.500z" fill="#3aa64a"/><path d="M10 10L13.750 16.500A7.500 7.500 0 0 0 17.500 10z" fill="#f2c230"/><path d="M10 10L17.500 10 A7.500 7.500 0 0 0 10 2.500z" fill="#f2c230"/><circle cx="10" cy="10" r="3.400" fill="#fff"/><circle cx="10" cy="10" r="2.400" fill="#4a8ae0"/>
<circle cx="30" cy="10" r="7.500" fill="#d0582a"/><circle cx="31" cy="9" r="4.500" fill="#3a5aa8"/><path d="M23 12c2 5 9 6 13 1-3 2-8 1-9-3z" fill="#e8902a"/>
<circle cx="50" cy="10" r="8" fill="#e8eef4" stroke="#6a7a88" stroke-width="1"/><circle cx="50" cy="10" r="6.500" fill="#4aa8e8"/><path d="M45.500 14.500l3-6 6-3-3 6z" fill="#fff"/>
<circle cx="70" cy="10" r="8" fill="#d01a3a"/><ellipse cx="70" cy="10" rx="2.600" ry="5.600" fill="#f6e0e4"/>
</svg>
<div class="a" style="left:1812px;top:131px;width:1px;height:905px;background:#333"></div>
<div class="a" style="left:1887px;top:134px;width:10px;height:10px;background:#8aa020"></div>
<div class="a" style="left:1890px;top:148px;width:9px;height:682px;background:#d2d3d7;border-radius:2px"></div>
<div class="a" style="left:1885px;top:365px;width:13px;height:3px;background:#8a9a30"></div>
<div class="a" style="left:1885px;top:474px;width:13px;height:3px;background:#8a9a30"></div>
<div class="a" style="left:1885px;top:582px;width:13px;height:3px;background:#8a9a30"></div>
<div class="a" style="left:1885px;top:673px;width:13px;height:3px;background:#8a9a30"></div>
<div class="a" style="left:1885px;top:764px;width:13px;height:3px;background:#8a9a30"></div>
<div class="a" style="left:1885px;top:854px;width:13px;height:3px;background:#8a9a30"></div>
</div>
<svg class="a" style="left:0;top:970px" width="140" height="90" viewBox="0 970 140 90"><g fill="none" stroke="#b4b4b4" stroke-width="0.9">
<path d="M47 988C52 983 62 984 72 994C78 1000 82 1005 84 1009"/>
<path d="M47 988C46 1000 52 1015 61 1031"/>
<path d="M44 999C42 1012 48 1022 56 1030L50 1034C46 1038 47 1043 48 1046"/>
<path d="M61 1031L55 1033C52 1037 51 1041 52 1047"/>
<path d="M70 1050C68 1030 78 1015 92 1005C102 998 112 997 117 1001C119 1007 110 1020 95 1033C88 1039 82 1043 79 1046"/>
<path d="M78 1046C77 1035 82 1025 92 1013C100 1005 108 1001 114 1000"/>
<path d="M107 1003C102 1015 92 1027 80 1035"/>
<path d="M88 1019L90 1025M90 1038L90 1046"/>
</g></svg>

</body></html>
